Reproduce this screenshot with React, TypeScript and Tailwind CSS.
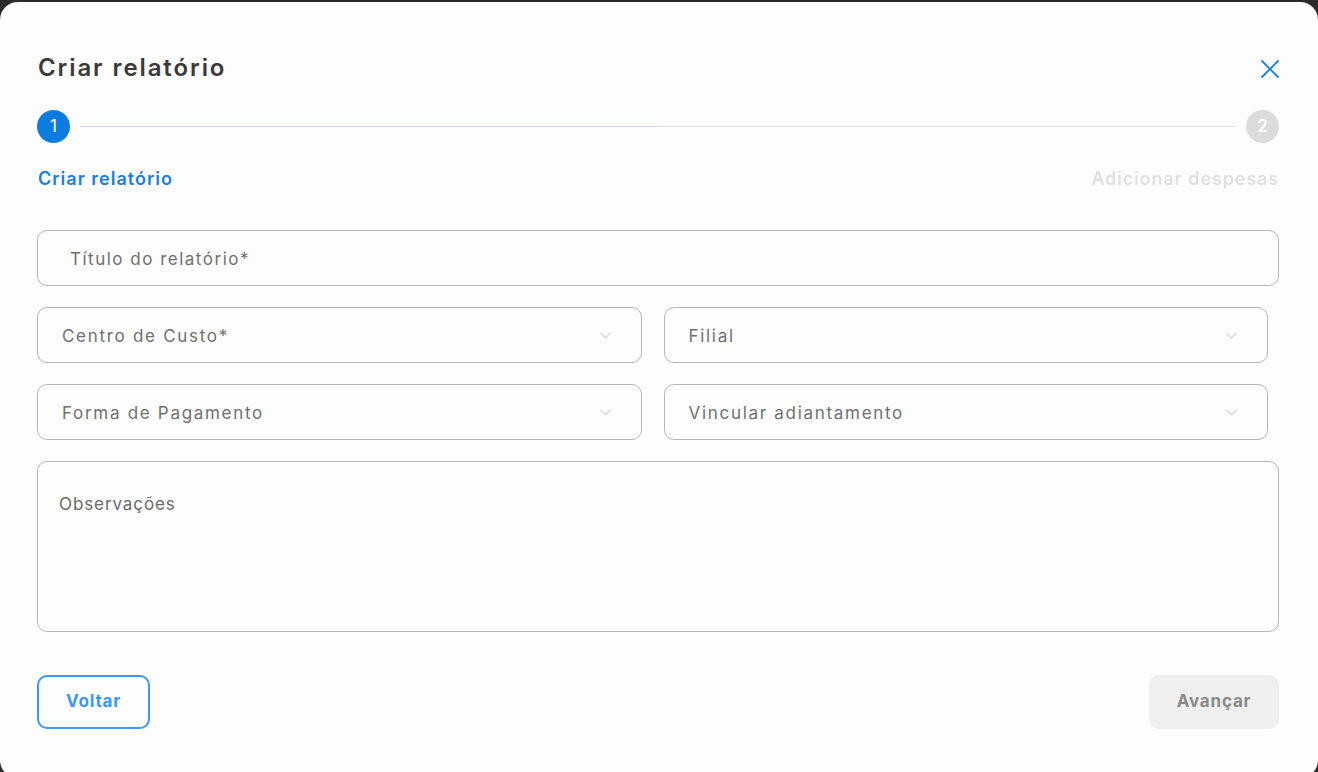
import { ChevronDown } from "lucide-react";

const font = { fontFamily: "Inter, 'Noto Sans', sans-serif" };

function Select({ label }: { label: string }) {
    return (
        <div className="flex-1 h-[56px] rounded-[10px] border border-[#b5b5b5] flex items-center justify-between pl-[24px] pr-[26px]">
            <span className="text-[17px] tracking-[1.7px] text-[#707070] pt-[3px]">{label}</span>
            <ChevronDown size={19} strokeWidth={1.3} className="text-[#cfcfcf]" />
        </div>
    );
}

export default function App() {
    return (
        <div className="h-[772px] overflow-hidden bg-[#2b2b2b] pt-[2px]" style={font}>
            <div className="h-[776px] rounded-[18px] bg-[#fdfdfd] pl-[37px] pr-[39px] pt-[50px]">
                {/* Header */}
                <div className="flex items-center justify-between h-[32px]">
                    <h1 className="text-[24px] font-semibold tracking-[1.9px] text-[#3a3a3a] pl-[1px]">Criar relatório</h1>
                    <svg width="18" height="18" viewBox="0 0 18 18" className="text-[#1a7fe0] mt-[1px]">
                        <path d="M1 1L17 17M17 1L1 17" stroke="currentColor" strokeWidth="1.8" strokeLinecap="round" />
                    </svg>
                </div>

                {/* Stepper */}
                <div className="flex items-center mt-[26px]">
                    <div className="w-[33px] h-[33px] rounded-full bg-[#0d7ce0] text-white flex items-center justify-center text-[17px]">1</div>
                    <div className="flex-1 flex mx-[10px] h-[1px]">
                        <div className="flex-1 bg-[#cbdaf2]" />
                        <div className="flex-1 bg-[#e2e2e2]" />
                    </div>
                    <div className="w-[33px] h-[33px] rounded-full bg-[#dcdcdc] text-white flex items-center justify-center text-[17px] font-semibold">2</div>
                </div>
                <div className="flex items-center justify-between mt-[22px]">
                    <span className="text-[18px] font-semibold tracking-[1px] text-[#1a7fe0] pl-[1px]">Criar relatório</span>
                    <span className="text-[18px] font-medium tracking-[1px] text-[#dedede]">Adicionar despesas</span>
                </div>

                {/* Form */}
                <div className="mt-[38px] flex flex-col gap-[21px]">
                    <div className="h-[56px] rounded-[10px] border border-[#b5b5b5] flex items-center pl-[32px]">
                        <span className="text-[17px] tracking-[1.5px] text-[#707070] pt-[3px]">Título do relatório*</span>
                    </div>
                    <div className="flex gap-[22px] pr-[11px]">
                        <Select label="Centro de Custo*" />
                        <Select label="Filial" />
                    </div>
                    <div className="flex gap-[22px] pr-[11px]">
                        <Select label="Forma de Pagamento" />
                        <Select label="Vincular adiantamento" />
                    </div>
                    <div className="h-[171px] rounded-[10px] border border-[#b5b5b5] pl-[21px] pt-[30px]">
                        <span className="text-[17px] tracking-[0.9px] text-[#6a6a6a]">Observações</span>
                    </div>
                </div>

                {/* Footer */}
                <div className="flex items-center justify-between mt-[43px]">
                    <button className="w-[113px] h-[54px] rounded-[10px] border-2 border-[#3d97f5] text-[#3d97f5] text-[17px] font-bold tracking-[0.8px]">Voltar</button>
                    <button className="w-[130px] h-[54px] rounded-[10px] bg-[#efefef] text-[#8a8a8a] text-[17px] font-bold tracking-[0.8px]">Avançar</button>
                </div>
            </div>
        </div>
    );
}
